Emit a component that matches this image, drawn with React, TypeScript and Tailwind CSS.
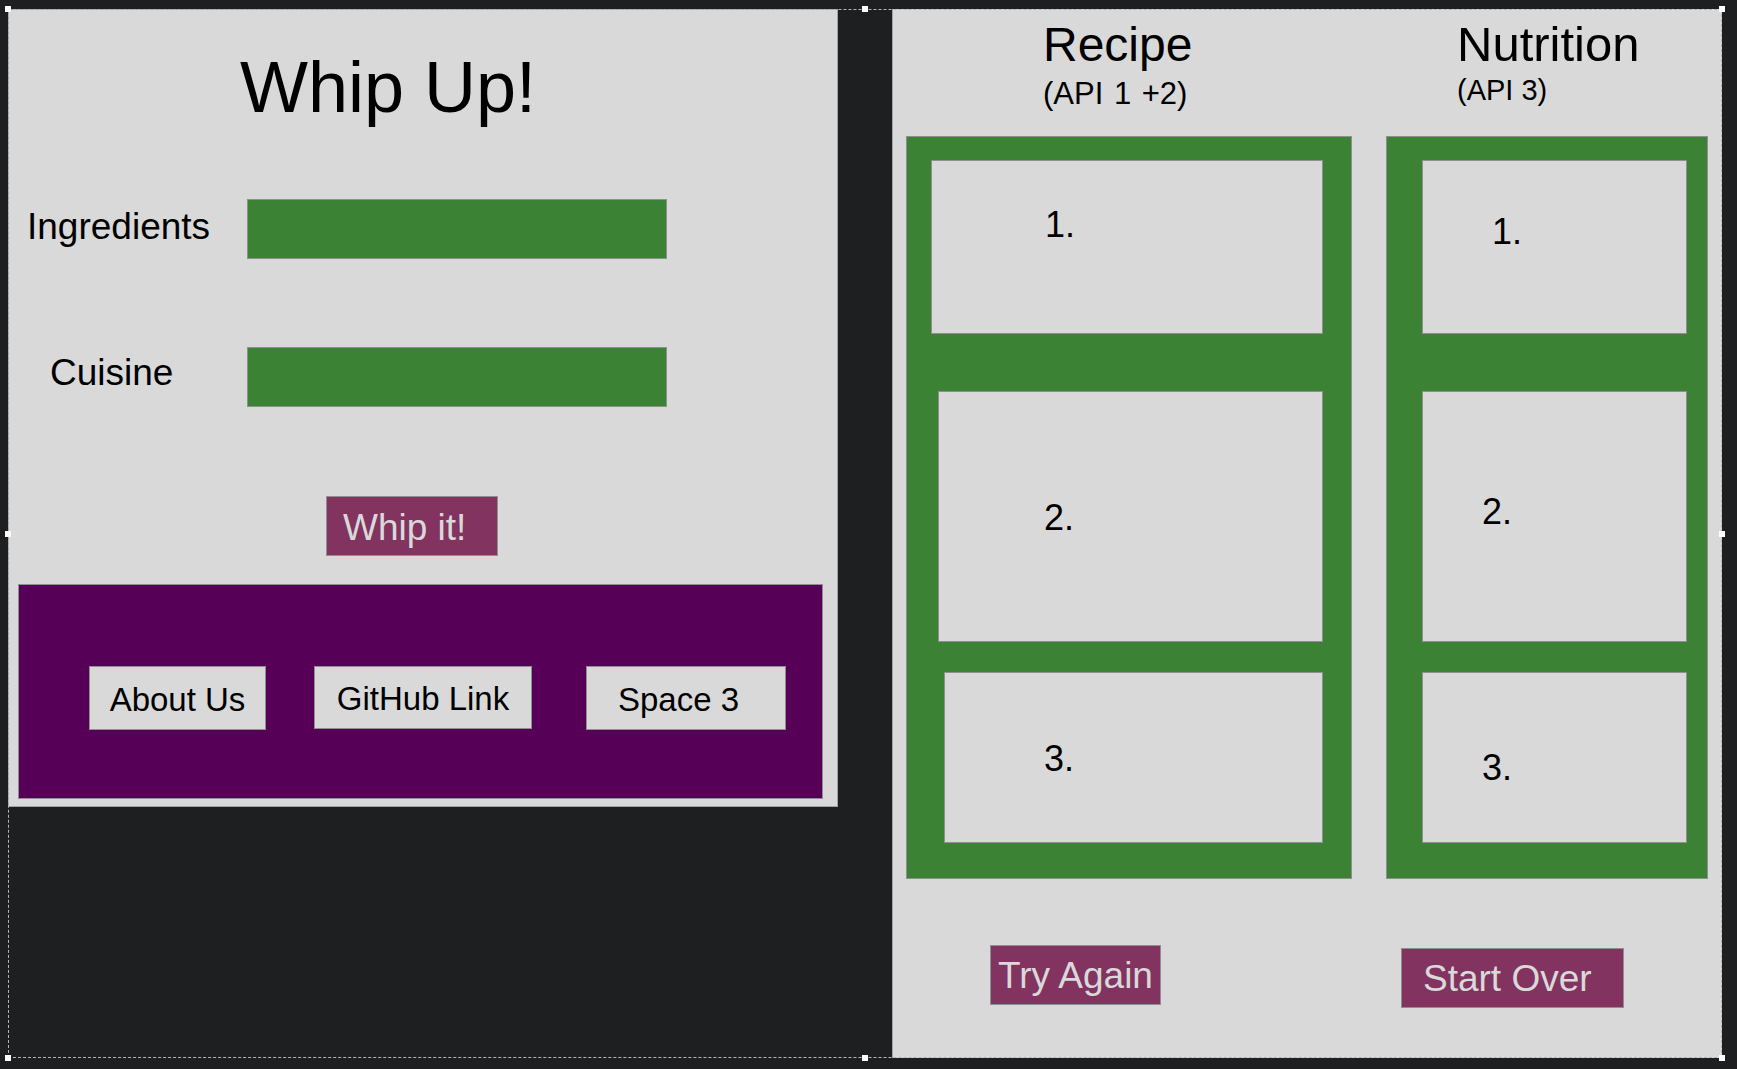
const font = { fontFamily: '"Liberation Sans", Arial, sans-serif' };

const recipeBoxes = [
  { n: '1.', box: 'w-[392px] h-[174px]', text: 'pl-[113px] pt-[46px]' },
  { n: '2.', box: 'w-[385px] h-[251px] mt-[57px]', text: 'pl-[105px] pt-[108px]' },
  { n: '3.', box: 'w-[379px] h-[171px] mt-[30px]', text: 'pl-[99px] pt-[68px]' },
];

const nutritionBoxes = [
  { n: '1.', box: 'w-[265px] h-[174px]', text: 'pl-[69px] pt-[53px]' },
  { n: '2.', box: 'w-[265px] h-[251px] mt-[57px]', text: 'pl-[59px] pt-[102px]' },
  { n: '3.', box: 'w-[265px] h-[171px] mt-[30px]', text: 'pl-[59px] pt-[77px]' },
];

const navLinks = [
  { label: 'About Us', cls: 'w-[177px] h-[64px] justify-center' },
  { label: 'GitHub Link', cls: 'w-[218px] h-[63px] justify-center ml-[48px]' },
  { label: 'Space 3', cls: 'w-[200px] h-[64px] pl-[31px] ml-[54px]' },
];

function ResultColumn({ boxes, pr }: { boxes: typeof recipeBoxes; pr: string }) {
  return (
    <div className={`flex h-[743px] shrink-0 flex-col items-end border border-[#8f8f8f] bg-[#3c8234] pt-[23px] ${pr}`}>
      {boxes.map((b) => (
        <div key={b.n} className={`shrink-0 border border-[#8f8f8f] bg-[#d9d9d9] ${b.box}`}>
          <div className={`text-[36px] leading-none text-black ${b.text}`}>{b.n}</div>
        </div>
      ))}
    </div>
  );
}

function Handle({ pos }: { pos: string }) {
  return <div className={`absolute h-[6px] w-[6px] bg-white ${pos}`} />;
}

export default function App() {
  return (
    <div className="h-[1069px] w-[1737px] overflow-hidden bg-[#1e1f21] pl-[8px] pt-[9px]" style={font}>
      <div className="relative flex h-[1049px] w-[1714px] items-start">
        {/* search panel */}
        <div className="flex h-[798px] w-[830px] flex-col border border-[#a3a3a3] bg-[#d9d9d9]">
          <h1 className="pl-[231px] pt-[41px] text-[72px] leading-none text-black">Whip Up!</h1>

          <div className="mt-[76px] flex items-start">
            <div className="mt-[9px] w-[238px] pl-[18px] text-[37px] leading-none text-black">Ingredients</div>
            <div className="h-[60px] w-[420px] border border-[#8f8f8f] bg-[#3c8234]" />
          </div>

          <div className="mt-[88px] flex items-start">
            <div className="mt-[7px] w-[238px] pl-[41px] text-[37px] leading-none text-black">Cuisine</div>
            <div className="h-[60px] w-[420px] border border-[#8f8f8f] bg-[#3c8234]" />
          </div>

          <button className="ml-[317px] mt-[89px] flex h-[60px] w-[172px] items-center border border-[#8f8f8f] bg-[#833360] pl-[16px] pt-[2px] text-[37px] leading-none text-[#d9d9d9]">
            Whip it!
          </button>

          <div className="ml-[9px] mt-[28px] flex h-[215px] w-[805px] items-start border border-[#8f8f8f] bg-[#560058] pl-[70px] pt-[81px]">
            {navLinks.map((l) => (
              <div
                key={l.label}
                className={`flex items-center border border-[#8f8f8f] bg-[#d9d9d9] pt-[2px] text-[33px] leading-none text-black ${l.cls}`}
              >
                {l.label}
              </div>
            ))}
          </div>
        </div>

        {/* results panel */}
        <div className="ml-[54px] flex h-[1049px] w-[830px] border-l border-[#a3a3a3] bg-[#d9d9d9] pl-[13px]">
          <div className="flex w-[446px] flex-col">
            <div className="h-[127px] shrink-0 pl-[137px] pt-[12px] text-black">
              <div className="text-[48px] leading-none">Recipe</div>
              <div className="mt-[9px] text-[31px] leading-none [word-spacing:2px]">(API 1 +2)</div>
            </div>
            <ResultColumn boxes={recipeBoxes} pr="pr-[28px]" />
            <button className="ml-[84px] mt-[66px] flex h-[60px] w-[171px] shrink-0 items-center justify-center border border-[#8f8f8f] bg-[#833360] text-[37px] leading-none text-[#d9d9d9]">
              Try Again
            </button>
          </div>

          <div className="ml-[34px] flex w-[322px] flex-col">
            <div className="h-[127px] shrink-0 pl-[71px] pt-[11px] text-black">
              <div className="text-[49px] leading-none">Nutrition</div>
              <div className="mt-[7px] text-[29px] leading-none">(API 3)</div>
            </div>
            <ResultColumn boxes={nutritionBoxes} pr="pr-[20px]" />
            <button className="ml-[15px] mt-[69px] flex h-[60px] w-[223px] shrink-0 items-center border border-[#8f8f8f] bg-[#833360] pl-[21px] text-[37px] leading-none text-[#d9d9d9]">
              Start Over
            </button>
          </div>
        </div>

        {/* selection outline */}
        <div className="pointer-events-none absolute inset-0 border border-dashed border-[#b5b5b5]" />
        <Handle pos="-left-[3px] -top-[3px]" />
        <Handle pos="left-[854px] -top-[3px]" />
        <Handle pos="-right-[3px] -top-[3px]" />
        <Handle pos="-left-[3px] top-[522px]" />
        <Handle pos="-right-[3px] top-[522px]" />
        <Handle pos="-left-[3px] -bottom-[3px]" />
        <Handle pos="left-[854px] -bottom-[3px]" />
        <Handle pos="-right-[3px] -bottom-[3px]" />
      </div>
    </div>
  );
}
